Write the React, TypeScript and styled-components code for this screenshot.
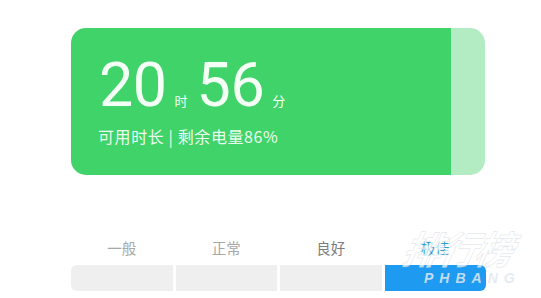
import * as React from 'react';
import styled, { createGlobalStyle } from 'styled-components';

const GlobalStyle = createGlobalStyle`
  html, body {
    margin: 0;
    padding: 0;
    background: #ffffff;
    font-family: Roboto, "Noto Sans CJK SC", sans-serif;
  }
`;

const Page = styled.div`
  position: relative;
  width: 541px;
  height: 298px;
  padding: 28px 0 0 71px;
  box-sizing: border-box;
  overflow: hidden;
`;

const Card = styled.div`
  display: flex;
  width: 414px;
  height: 147px;
  border-radius: 15px;
  overflow: hidden;
`;

const CardMain = styled.div`
  flex: 1;
  background: #3fd36a;
  padding: 26px 0 0 28px;
  box-sizing: border-box;
  color: #f4fff6;
`;

const CardRest = styled.div`
  width: 34px;
  background: #b3ebc3;
`;

const TimeRow = styled.div`
  display: flex;
  align-items: baseline;
  height: 72px;
`;

const Big = styled.span`
  font-family: Roboto, sans-serif;
  font-weight: 400;
  font-size: 61px;
  letter-spacing: -0.5px;
  line-height: 62px;
`;

const Unit = styled.span`
  font-family: "Noto Sans CJK SC", sans-serif;
  font-size: 13px;
  margin: 0 9px 0 8px;
`;

const Sub = styled.div`
  font-family: "Noto Sans CJK SC", sans-serif;
  font-size: 16px;
  letter-spacing: 0.6px;
  line-height: 20px;
  margin-left: -1px;
  color: #eafbee;
`;

const Levels = styled.div`
  width: 415px;
  margin-top: 63px;
  display: grid;
  grid-template-columns: repeat(4, 1fr);
  column-gap: 3px;
`;

const Label = styled.div<{ $tone: string }>`
  text-align: center;
  font-family: "Noto Sans CJK SC", sans-serif;
  font-size: 14.5px;
  line-height: 20px;
  color: ${(p) => p.$tone};
`;

const Bar = styled.div`
  width: 415px;
  margin-top: 7px;
  display: grid;
  grid-template-columns: repeat(4, 1fr);
  column-gap: 3px;
  height: 26px;
`;

const Segment = styled.div<{ $active?: boolean; $pos: 'first' | 'mid' | 'last' }>`
  background: ${(p) => (p.$active ? '#1e9bf0' : '#efefef')};
  border-radius: ${(p) =>
    p.$pos === 'first' ? '6px 0 0 6px' : p.$pos === 'last' ? '0 6px 6px 0' : '0'};
`;

const Watermark = styled.div`
  position: absolute;
  left: 404px;
  top: 228px;
  color: rgba(255, 255, 255, 0.7);
  -webkit-text-stroke: 0.5px rgba(170, 180, 190, 0.45);
  font-family: "Noto Sans CJK SC", sans-serif;
  font-weight: 700;
  font-style: italic;
  font-size: 38px;
  line-height: 40px;
  letter-spacing: -2px;
  transform: skewX(-12deg);
`;

const WatermarkSub = styled.div`
  position: absolute;
  left: 424px;
  top: 270px;
  color: rgba(225, 232, 240, 0.85);
  font-family: "Liberation Sans", sans-serif;
  font-weight: 700;
  font-style: italic;
  font-size: 14px;
  letter-spacing: 6px;
`;

const levels = [
  { name: '一般', tone: '#a8a8a8' },
  { name: '正常', tone: '#a8a8a8' },
  { name: '良好', tone: '#7d7d7d' },
  { name: '极佳', tone: '#2a9fd0' },
];

export default function App() {
  return (
    <>
      <GlobalStyle />
      <Page>
        <Card>
          <CardMain>
            <TimeRow>
              <Big>20</Big>
              <Unit>时</Unit>
              <Big>56</Big>
              <Unit>分</Unit>
            </TimeRow>
            <Sub>可用时长 | 剩余电量86%</Sub>
          </CardMain>
          <CardRest />
        </Card>
        <Levels>
          {levels.map((l) => (
            <Label key={l.name} $tone={l.tone}>
              {l.name}
            </Label>
          ))}
        </Levels>
        <Bar>
          <Segment $pos="first" />
          <Segment $pos="mid" />
          <Segment $pos="mid" />
          <Segment $pos="last" $active />
        </Bar>
        <Watermark>排行榜</Watermark>
        <WatermarkSub>PHBANG</WatermarkSub>
      </Page>
    </>
  );
}
